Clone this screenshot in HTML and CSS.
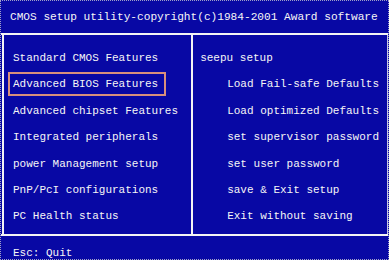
FILE: index.html
```html
<!DOCTYPE html>
<html lang="en">
<head>
    <meta charset="UTF-8">
    <meta name="viewport" content="width=device-width, initial-scale=1.0">
    <title>CMOS Setup Utility</title>
    <link rel="stylesheet" href="styles.css">
</head>
<body>
    <div class="screen">
        <div class="title">CMOS setup utility-copyright(c)1984-2001 Award software</div>

        <div class="main">
            <!-- Left menu -->
            <div class="column left">
                <div class="item">Standard CMOS Features</div>
                <div class="item selected">Advanced BIOS Features</div>
                <div class="item">Advanced chipset Features</div>
                <div class="item">Integrated peripherals</div>
                <div class="item">power Management setup</div>
                <div class="item">PnP/PcI configurations</div>
                <div class="item">PC Health status</div>
            </div>

            <!-- Right menu -->
            <div class="column right">
                <div class="item">seepu setup</div>
                <div class="item indent">Load Fail-safe Defaults</div>
                <div class="item indent">Load optimized Defaults</div>
                <div class="item indent">set supervisor password</div>
                <div class="item indent">set user password</div>
                <div class="item indent">save &amp; Exit setup</div>
                <div class="item indent">Exit without saving</div>
            </div>
        </div>

        <div class="footer">Esc: Quit</div>
    </div>
</body>
</html>
```

FILE: styles.css
```css
/* General Styles */
body {
    margin: 0;
    background: #ffffff;
}

.screen {
    box-sizing: border-box;
    width: 389px;
    height: 260px;
    background: #0808a4;
    border: 1px dotted #a0a0c8;
    color: #f6f6f6;
    font-family: 'Liberation Mono', 'DejaVu Sans Mono', monospace;
    font-size: 11px;
    overflow: hidden;
}

.title {
    height: 32px;
    line-height: 33px;
    padding-left: 9px;
    font-size: 11.15px;
    white-space: nowrap;
}

/* Menu area */
.main {
    display: flex;
    height: 199px;
    border-top: 2px solid #f4f4f4;
    border-bottom: 2px solid #f4f4f4;
    padding-left: 1px;
}

.column {
    box-sizing: border-box;
    padding-top: 11px;
}

.left {
    width: 193px;
    padding-left: 4px;
    border-left: 2px solid #f4f4f4;
    border-right: 2px solid #f4f4f4;
}

.right {
    flex: 1;
    padding-left: 2px;
    border-right: 1px solid #c8c8e0;
}

.item {
    box-sizing: border-box;
    display: table;
    height: 24px;
    line-height: 20px;
    margin-bottom: 2.4px;
    padding: 0 6px 0 3px;
    border: 2px solid transparent;
    white-space: nowrap;
}

.item.selected {
    border-color: #d8907c;
}

.item.indent {
    margin-left: 27px;
}

.footer {
    height: 22px;
    line-height: 22px;
    padding: 6px 0 0 12px;
}
```
